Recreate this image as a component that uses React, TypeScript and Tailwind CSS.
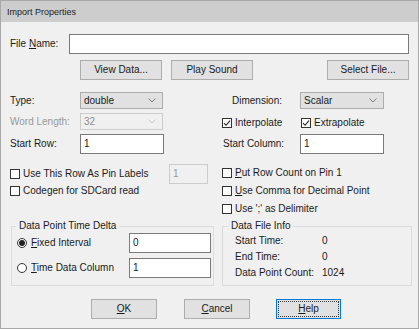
import React from 'react';

const Chevron = ({ disabled }: { disabled?: boolean }) => (
  <svg width="8" height="5" viewBox="0 0 8 5" className="shrink-0">
    <path d="M0.5 0.5 L4 4 L7.5 0.5" fill="none" stroke={disabled ? '#c6c6c6' : '#707070'} strokeWidth="0.9" />
  </svg>
);

const Combo = ({ value, width, disabled }: { value: string; width: string; disabled?: boolean }) => (
  <div
    className={`flex h-[17px] items-center justify-between border pl-[3px] pr-[6px] ${width} ${
      disabled ? 'border-[#cccccc] bg-[#f0f0f0] text-[#8d8d8d]' : 'border-[#adadad] bg-[#e1e1e1]'
    }`}
  >
    <span>{value}</span>
    <Chevron disabled={disabled} />
  </div>
);

const TextBox = ({ value, width, disabled }: { value: string; width: string; disabled?: boolean }) => (
  <div
    className={`h-[20px] border pl-[3px] pt-[2px] leading-[13px] ${width} ${
      disabled ? 'border-[#cccccc] bg-[#f0f0f0] text-[#9a9a9a]' : 'border-[#7a7a7a] bg-white'
    }`}
  >
    {value}
  </div>
);

const Button = ({ children, width, focused }: { children: React.ReactNode; width: string; focused?: boolean }) => (
  <div
    className={`flex h-[20px] shrink-0 items-center justify-center border bg-[#e1e1e1] ${width} ${
      focused
        ? 'border-[#0078d7] outline-1 outline-dotted outline-offset-[-3px] outline-[#333333]'
        : 'border-[#adadad]'
    }`}
  >
    {children}
  </div>
);

const Check = ({ checked, children }: { checked?: boolean; children: React.ReactNode }) => (
  <div className="flex items-center">
    <div className="flex h-[10px] w-[10px] shrink-0 items-center justify-center border border-[#333333] bg-white">
      {checked && (
        <svg width="8" height="8" viewBox="0 0 8 8">
          <path d="M1 4.2 L3.1 6.3 L7 1.6" fill="none" stroke="#222222" strokeWidth="1.1" />
        </svg>
      )}
    </div>
    <span className="ml-[3px]">{children}</span>
  </div>
);

const Radio = ({ checked, children }: { checked?: boolean; children: React.ReactNode }) => (
  <div className="flex w-[112px] shrink-0 items-center">
    <div className="flex h-[10px] w-[10px] shrink-0 items-center justify-center rounded-full border border-[#333333] bg-white">
      {checked && <div className="h-[6px] w-[6px] rounded-full bg-[#222222]" />}
    </div>
    <span className="ml-[4px]">{children}</span>
  </div>
);

export default function App() {
  return (
    <div className="flex h-[329px] w-[419px] flex-col border border-[#a8a8a8] bg-[#f0f0f0] font-['Liberation_Sans',Arial,sans-serif] text-[10px] leading-[12px] text-[#1a1a1a]">
      {/* Title bar */}
      <div className="flex h-[21px] shrink-0 items-center bg-[#cdcdcd] pl-[6px] text-[9px] text-[#222222]">
        Import Properties
      </div>

      <div className="flex flex-col pl-[9px]">
        {/* File name */}
        <div className="mt-[12px] flex h-[20px] items-center">
          <span className="w-[59px]">
            File <span className="underline">N</span>ame:
          </span>
          <div className="h-[20px] w-[340px] border border-[#7a7a7a] bg-white" />
        </div>

        {/* Action buttons */}
        <div className="mt-[6px] flex">
          <div className="ml-[70px]">
            <Button width="w-[82px]">View Data...</Button>
          </div>
          <div className="ml-[9px]">
            <Button width="w-[82px]">Play Sound</Button>
          </div>
          <div className="ml-[74px]">
            <Button width="w-[82px]">Select File...</Button>
          </div>
        </div>

        {/* Settings */}
        <div className="mt-[12px] flex items-start">
          <div className="flex w-[198px] flex-col">
            <div className="flex h-[17px] items-center">
              <span className="w-[70px]">Type:</span>
              <Combo value="double" width="w-[83px]" />
            </div>
            <div className="mt-[4px] flex h-[17px] items-center">
              <span className="w-[70px] text-[#999999]">Word Length:</span>
              <Combo value="32" width="w-[83px]" disabled />
            </div>
            <div className="mt-[4px] flex h-[20px] items-center">
              <span className="w-[70px]">Start Row:</span>
              <TextBox value="1" width="w-[84px]" />
            </div>
            <div className="mt-[10px] flex h-[20px] items-center justify-between">
              <Check>Use This Row As Pin Labels</Check>
              <TextBox value="1" width="w-[39px]" disabled />
            </div>
            <div className="flex h-[14px] items-center">
              <Check>Codegen for SDCard read</Check>
            </div>
          </div>

          <div className="ml-[14px] flex w-[189px] flex-col">
            <div className="flex h-[17px] items-center">
              <span className="ml-[10px] w-[68px]">Dimension:</span>
              <Combo value="Scalar" width="w-[84px]" />
            </div>
            <div className="mt-[5px] flex h-[17px] items-center">
              <div className="w-[79px]">
                <Check checked>Interpolate</Check>
              </div>
              <Check checked>Extrapolate</Check>
            </div>
            <div className="mt-[3px] flex h-[20px] items-center">
              <span className="ml-[1px] w-[77px]">Start Column:</span>
              <TextBox value="1" width="w-[84px]" />
            </div>
            <div className="mt-[10px] flex h-[18px] items-center">
              <Check>
                <span className="underline">P</span>ut Row Count on Pin 1
              </Check>
            </div>
            <div className="flex h-[18px] items-center">
              <Check>
                <span className="underline">U</span>se Comma for Decimal Point
              </Check>
            </div>
            <div className="flex h-[18px] items-center">
              <Check>Use ';' as Delimiter</Check>
            </div>
          </div>
        </div>

        {/* Group boxes */}
        <div className="mt-[2px] flex">
          <fieldset className="ml-[1px] h-[66px] w-[203px] border border-[#dcdcdc] pl-[5px]">
            <legend className="ml-[-1px] px-[3px] leading-[12px]">Data Point Time Delta</legend>
            <div className="mt-[1px] flex h-[20px] items-center">
              <Radio checked>
                <span className="underline">F</span>ixed Interval
              </Radio>
              <TextBox value="0" width="w-[82px]" />
            </div>
            <div className="mt-[5px] flex h-[20px] items-center">
              <Radio>
                <span className="underline">T</span>ime Data Column
              </Radio>
              <TextBox value="1" width="w-[82px]" />
            </div>
          </fieldset>

          <fieldset className="ml-[8px] h-[66px] w-[190px] border border-[#dcdcdc] pl-[12px]">
            <legend className="ml-[-7px] px-[3px] leading-[12px]">Data File Info</legend>
            <div className="mt-[1px] flex h-[16px] items-center">
              <span className="w-[87px]">Start Time:</span>
              <span>0</span>
            </div>
            <div className="flex h-[16px] items-center">
              <span className="w-[87px]">End Time:</span>
              <span>0</span>
            </div>
            <div className="flex h-[16px] items-center">
              <span className="w-[87px]">Data Point Count:</span>
              <span>1024</span>
            </div>
          </fieldset>
        </div>

        {/* Dialog buttons */}
        <div className="mt-[13px] flex">
          <div className="ml-[81px]">
            <Button width="w-[66px]">
              <span className="underline">O</span>K
            </Button>
          </div>
          <div className="ml-[27px]">
            <Button width="w-[66px]">
              <span className="underline">C</span>ancel
            </Button>
          </div>
          <div className="ml-[26px]">
            <Button width="w-[65px]" focused>
              <span className="underline">H</span>elp
            </Button>
          </div>
        </div>
      </div>
    </div>
  );
}
